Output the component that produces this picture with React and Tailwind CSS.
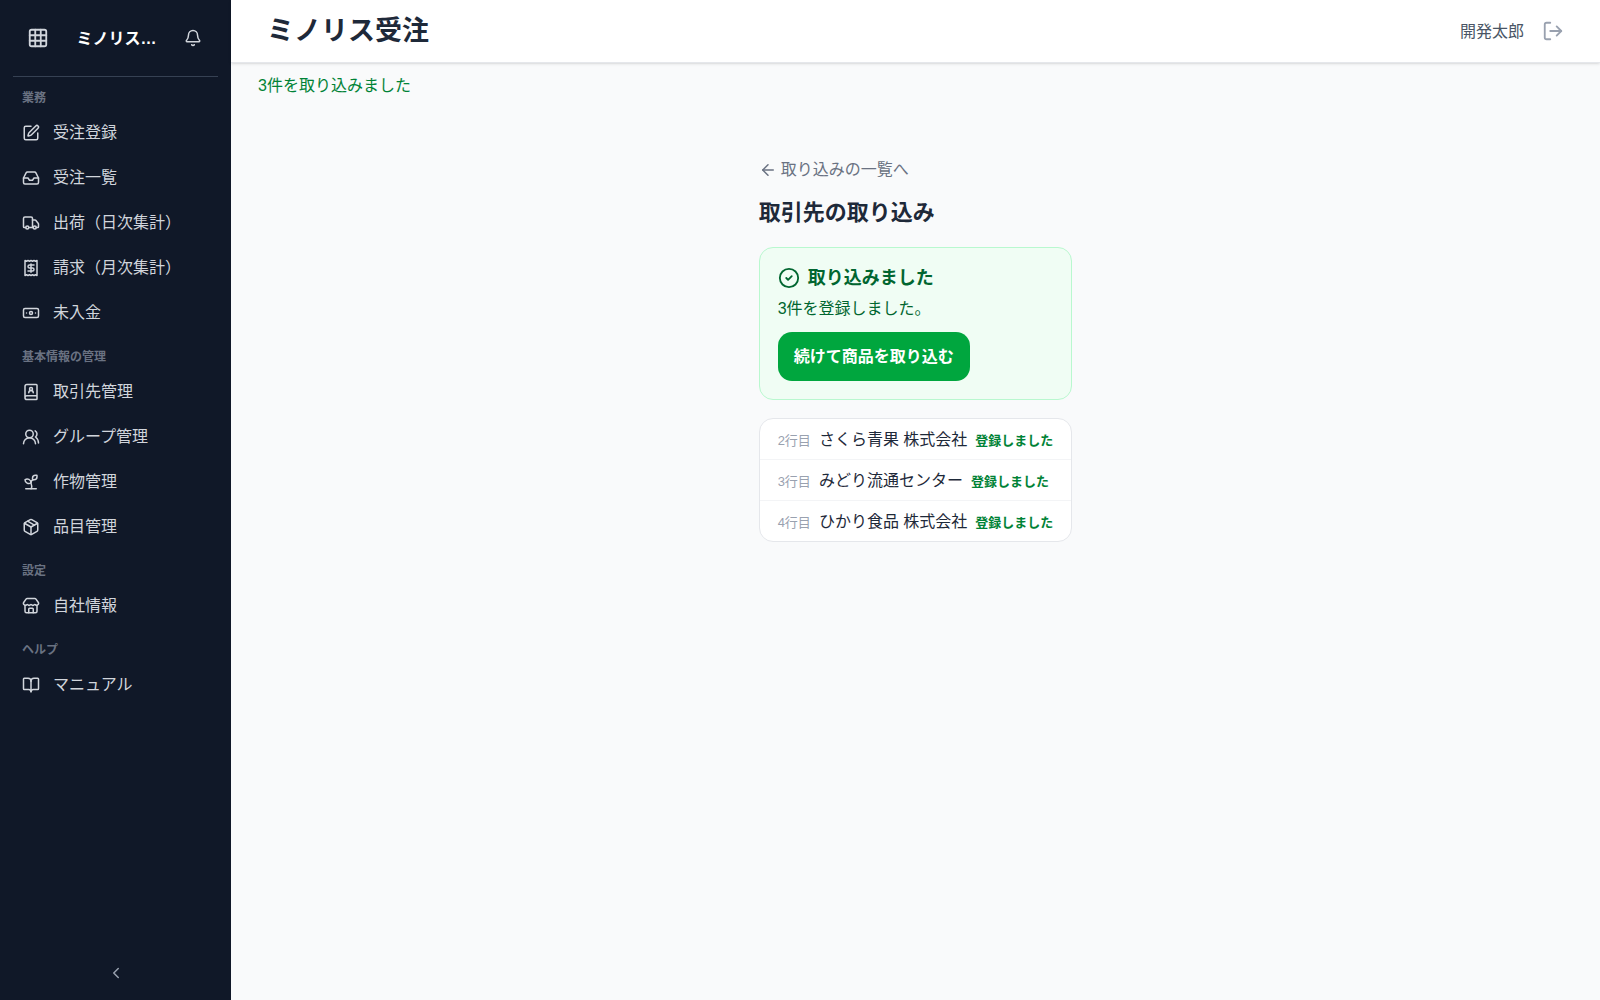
import React from "react";
import {
  ArrowLeft,
  Banknote,
  Bell,
  BookOpen,
  BookUser,
  ChevronLeft,
  CircleCheck,
  Grid3x3,
  Inbox,
  LogOut,
  Package,
  Receipt,
  Sprout,
  SquarePen,
  Store,
  Truck,
  UsersRound,
} from "lucide-react";

const sections = [
  {
    title: "業務",
    items: [
      { label: "受注登録", icon: SquarePen },
      { label: "受注一覧", icon: Inbox },
      { label: "出荷（日次集計）", icon: Truck },
      { label: "請求（月次集計）", icon: Receipt },
      { label: "未入金", icon: Banknote },
    ],
  },
  {
    title: "基本情報の管理",
    items: [
      { label: "取引先管理", icon: BookUser },
      { label: "グループ管理", icon: UsersRound },
      { label: "作物管理", icon: Sprout },
      { label: "品目管理", icon: Package },
    ],
  },
  { title: "設定", items: [{ label: "自社情報", icon: Store }] },
  { title: "ヘルプ", items: [{ label: "マニュアル", icon: BookOpen }] },
];

const rows = [
  { line: "2行目", name: "さくら青果 株式会社" },
  { line: "3行目", name: "みどり流通センター" },
  { line: "4行目", name: "ひかり食品 株式会社" },
];

function Sidebar() {
  return (
    <aside className="flex w-[231px] shrink-0 flex-col bg-gray-900 text-gray-300">
      <div className="mx-[13px] flex h-[77px] items-center justify-between border-b border-gray-700 pr-4 pl-[14px]">
        <button type="button" aria-label="アプリ一覧">
          <Grid3x3 size={22} />
        </button>
        <span className="pt-[2px] text-[16px] leading-6 font-bold whitespace-nowrap text-white">
          ミノリス…
        </span>
        <button type="button" aria-label="お知らせ">
          <Bell size={18} />
        </button>
      </div>
      <nav className="flex flex-1 flex-col gap-[10px] px-[22px] pt-[9px]">
        {sections.map((section) => (
          <section key={section.title}>
            <h2 className="text-[12px] leading-6 font-semibold text-gray-500">{section.title}</h2>
            <ul>
              {section.items.map(({ label, icon: Icon }) => (
                <li key={label}>
                  <a href="#" className="flex h-[45px] items-center gap-[13px] text-[16px]">
                    <Icon size={18} />
                    {label}
                  </a>
                </li>
              ))}
            </ul>
          </section>
        ))}
      </nav>
      <button
        type="button"
        aria-label="サイドバーを閉じる"
        className="flex h-[54px] items-center justify-center text-gray-400"
      >
        <ChevronLeft size={18} />
      </button>
    </aside>
  );
}

function Header() {
  return (
    <header className="flex h-[63px] items-center justify-between border-b border-gray-200 bg-white px-9 shadow-sm">
      <h1 className="text-[27px] leading-9 font-bold text-gray-800">ミノリス受注</h1>
      <div className="flex items-center gap-[18px]">
        <span className="pt-[2px] text-[16px] text-gray-600">開発太郎</span>
        <button type="button" aria-label="ログアウト" className="text-gray-400">
          <LogOut size={22} />
        </button>
      </div>
    </header>
  );
}

export default function App() {
  return (
    <div className="flex min-h-screen bg-gray-50 font-['Liberation_Sans','Noto_Sans_CJK_JP',sans-serif]">
      <Sidebar />
      <div className="flex min-w-0 flex-1 flex-col">
        <Header />
        <p role="status" className="px-[27px] pt-[11px] text-[16px] leading-6 text-green-700">
          3件を取り込みました
        </p>
        <main className="flex flex-col items-center pt-[60px]">
          <div className="flex flex-col">
            <a href="#" className="flex items-center gap-1 text-[16px] leading-6 text-gray-500">
              <ArrowLeft size={18} />
              取り込みの一覧へ
            </a>
            <h2 className="mt-[15px] text-[22px] leading-8 font-bold text-gray-800">取引先の取り込み</h2>
            <section className="mt-[18px] rounded-[14px] border border-green-200 bg-green-50 p-[18px]">
              <h3 className="flex items-center gap-2 text-[18px] leading-6 font-bold text-green-800">
                <CircleCheck size={22} />
                取り込みました
              </h3>
              <p className="mt-[7px] text-[16px] leading-6 text-green-800">3件を登録しました。</p>
              <button
                type="button"
                className="mt-[11px] h-[49px] rounded-[14px] bg-green-600 px-4 text-[16px] font-bold text-white"
              >
                続けて商品を取り込む
              </button>
            </section>
            <ul className="mt-[18px] divide-y divide-gray-100 rounded-[14px] border border-gray-200 bg-white">
              {rows.map((row) => (
                <li key={row.line} className="flex items-baseline gap-2 px-[18px] pt-[9px] pb-[7px] text-[16px] leading-6">
                  <span className="text-[13px] leading-5 text-gray-400">{row.line}</span>
                  <span className="text-gray-800">{row.name}</span>
                  <span className="text-[13px] leading-5 font-bold text-green-700">登録しました</span>
                </li>
              ))}
            </ul>
          </div>
        </main>
      </div>
    </div>
  );
}
